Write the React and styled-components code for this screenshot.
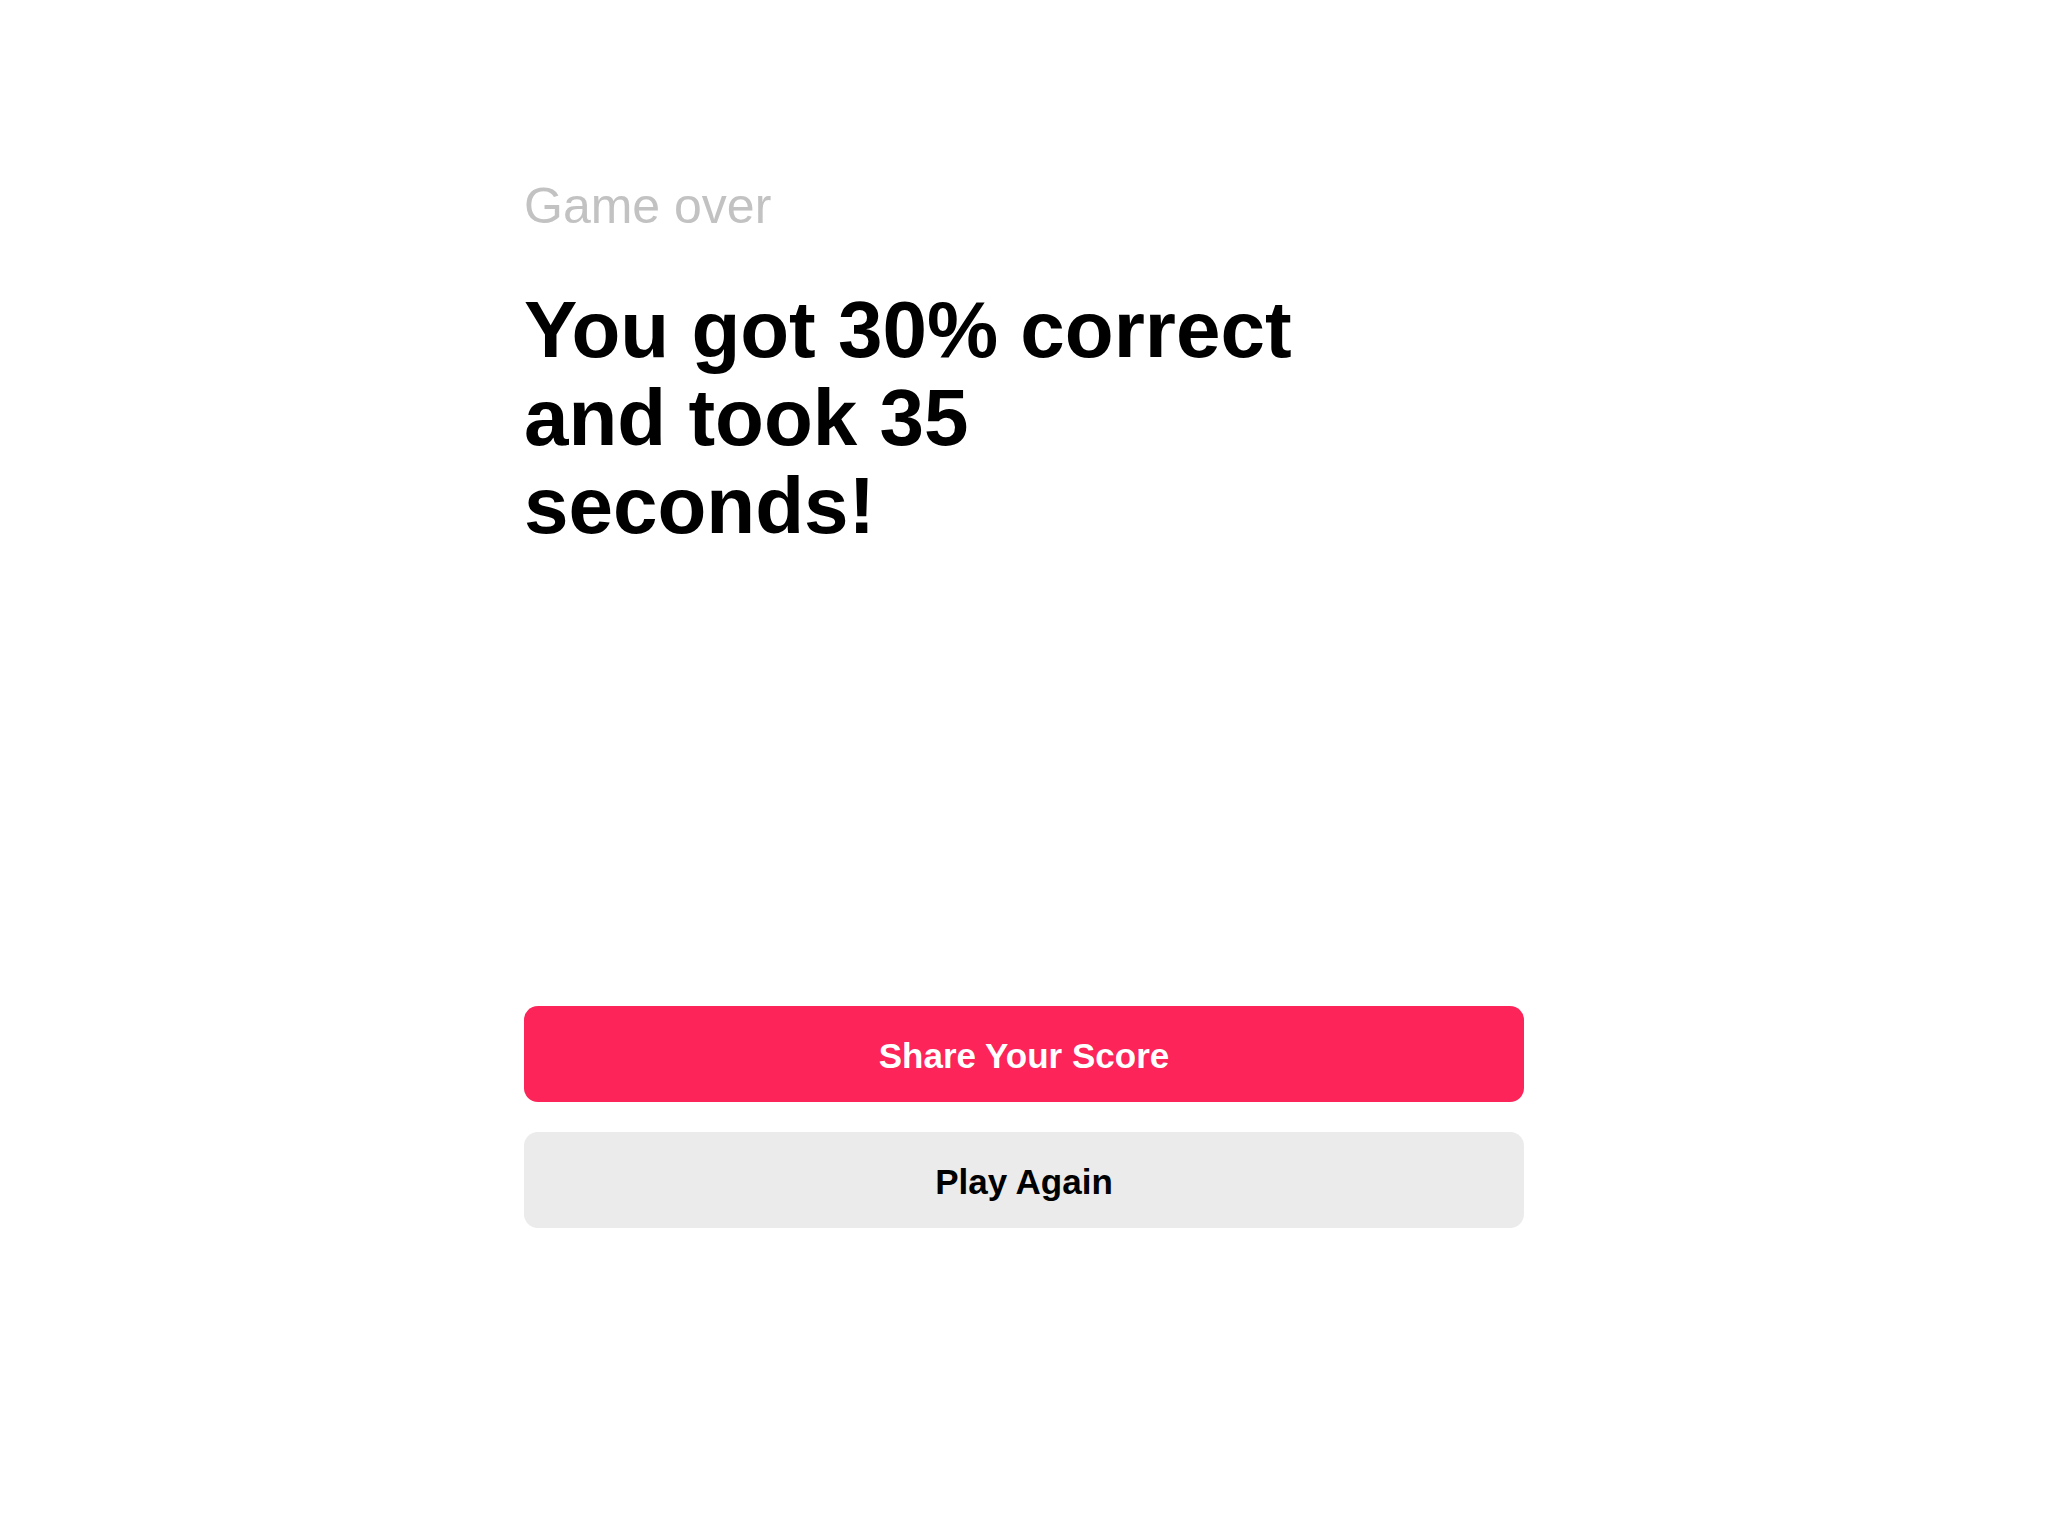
import React from "react";
import styled, { createGlobalStyle } from "styled-components";

const GlobalStyle = createGlobalStyle`
  html, body {
    margin: 0;
    padding: 0;
    background-color: #fff;
    font-family: "Liberation Sans", Arial, Helvetica, sans-serif;
  }
`;

const MainDiv = styled.div`
  margin: 0 auto;
  width: 1000px;
  padding-top: 178px;
  display: flex;
  flex-direction: column;
`;

const SubTitle = styled.div`
  font-size: 50px;
  line-height: 56px;
  font-weight: 400;
  color: #c2c2c2;
`;

const Title = styled.h1`
  margin: 52px 0 0 0;
  max-width: 795px;
  font-size: 80px;
  line-height: 1.1;
  font-weight: 700;
  color: #000;
`;

const ButtonGroup = styled.div`
  display: flex;
  flex-direction: column;
  gap: 30px;
  margin-top: 456px;
`;

const Button = styled.button`
  height: 96px;
  width: 100%;
  padding: 4px 0 0 0;
  border: none;
  border-radius: 14px;
  background-color: ${(props) => (props.$primary ? "#fc2458" : "#ebebeb")};
  color: ${(props) => (props.$primary ? "#fff" : "#000")};
  font-family: "Liberation Sans", Arial, sans-serif;
  font-size: 35px;
  font-weight: 700;
  cursor: pointer;
`;

function App() {
  const percent = 30;
  const seconds = 35;

  return (
    <MainDiv>
      <GlobalStyle />
      <SubTitle>Game over</SubTitle>
      <Title>
        You got {percent}% correct and took {seconds} seconds!
      </Title>
      <ButtonGroup>
        <Button $primary>Share Your Score</Button>
        <Button>Play Again</Button>
      </ButtonGroup>
    </MainDiv>
  );
}

export default App;
